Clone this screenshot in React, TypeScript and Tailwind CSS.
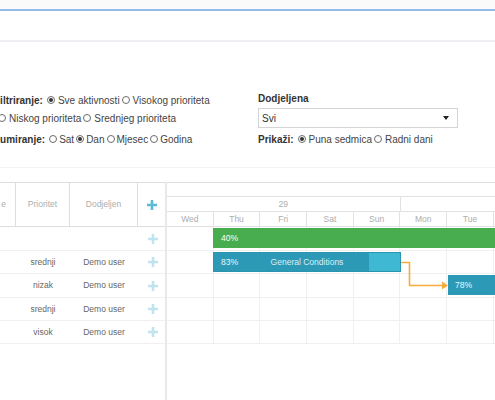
import React from "react";

function Radio({ checked = false }: { checked?: boolean }) {
  return (
    <span className="inline-flex w-[8px] h-[8px] shrink-0 rounded-full border border-[#6b6b6b] bg-white items-center justify-center">
      {checked && <span className="w-[4px] h-[4px] rounded-full bg-[#333]" />}
    </span>
  );
}

function Plus({ color }: { color: string }) {
  return (
    <svg width="10" height="10" viewBox="0 0 10 10">
      <path d="M5 0v10M0 5h10" stroke={color} strokeWidth="2.6" />
    </svg>
  );
}

const days = ["Wed", "Thu", "Fri", "Sat", "Sun", "Mon", "Tue"];

const rows = [
  { p: "", d: "", h: "h-[24px]" },
  { p: "srednji", d: "Demo user", h: "h-[23px]" },
  { p: "nizak", d: "Demo user", h: "h-[24px]" },
  { p: "srednji", d: "Demo user", h: "h-[23px]" },
  { p: "visok", d: "Demo user", h: "h-[23px]" },
];

export default function App() {
  return (
    <div className="w-[495px] h-[400px] overflow-hidden bg-white font-['Liberation_Sans',Arial,sans-serif]">
      <div className="h-[9px] bg-[#fafafa]" />
      <div className="h-[2px] bg-[#94bceb]" />
      <div className="h-[29px]" />
      <div className="h-[2px] bg-[#efeff3]" />

      {/* Filters */}
      <div className="flex pt-[49px] text-[10px] text-[#444]">
        <div className="w-[264px] -ml-[6px] pt-[2px] shrink-0">
          <div className="flex items-center h-[14px] gap-[2px] whitespace-nowrap">
            <b className="text-[#333] mr-[2px]">Filtriranje:</b>
            <Radio checked />
            <span className="ml-[1px]">Sve aktivnosti</span>
            <Radio />
            <span className="ml-[1px]">Visokog prioriteta</span>
          </div>
          <div className="flex items-center h-[14px] gap-[2px] mt-[4px] pl-[4px] whitespace-nowrap">
            <Radio />
            <span className="ml-[1px]">Niskog prioriteta</span>
            <Radio />
            <span className="ml-[1px]">Srednjeg prioriteta</span>
          </div>
          <div className="flex items-center h-[14px] gap-[2px] mt-[7px] whitespace-nowrap">
            <b className="text-[#333] mr-[2px]">Zumiranje:</b>
            <Radio />
            <span>Sat</span>
            <Radio checked />
            <span>Dan</span>
            <Radio />
            <span>Mjesec</span>
            <Radio />
            <span>Godina</span>
          </div>
        </div>
        <div className="w-[200px] shrink-0">
          <div className="h-[14px] flex items-center">
            <b className="text-[#333]">Dodjeljena</b>
          </div>
          <div className="mt-[3px] h-[20px] border border-[#d4d4d4] flex items-center justify-between pl-[3px] pr-[8px] text-[#333]">
            <span>Svi</span>
            <svg width="6" height="4" viewBox="0 0 6 4">
              <path d="M0 0h6L3 4z" fill="#222" />
            </svg>
          </div>
          <div className="flex items-center h-[14px] gap-[2px] mt-[4px] whitespace-nowrap">
            <b className="text-[#333] mr-[2px]">Prikaži:</b>
            <Radio checked />
            <span className="ml-[1px]">Puna sedmica</span>
            <Radio />
            <span className="ml-[1px]">Radni dani</span>
          </div>
        </div>
      </div>

      <div className="mt-[21px] h-px bg-[#f3f3f3]" />
      <div className="h-[14px]" />

      {/* Table */}
      <div className="flex h-[218px] text-[8.5px]">
        {/* Left grid */}
        <div className="w-[165px] shrink-0">
          <div className="h-[45px] border-t border-b border-[#dedede] flex text-[#adadad]">
            <div className="w-[16px] border-r border-[#dedede] flex items-center justify-end pr-[9px] overflow-hidden">
              e
            </div>
            <div className="w-[54px] border-r border-[#dedede] flex items-center justify-center">
              Prioritet
            </div>
            <div className="w-[68px] border-r border-[#dedede] flex items-center justify-center">
              Dodjeljen
            </div>
            <div className="w-[27px] flex items-center justify-center pl-[1px]">
              <Plus color="#58bbd9" />
            </div>
          </div>
          {rows.map((r, i) => (
            <div key={i} className={`${r.h} border-b border-[#f0f0f0] flex text-[#666]`}>
              <div className="w-[16px]" />
              <div className="w-[54px] flex items-center justify-center">{r.p}</div>
              <div className="w-[68px] flex items-center justify-center">{r.d}</div>
              <div className="w-[27px] flex items-center justify-center pl-[2px]">
                <Plus color="#bfe4ef" />
              </div>
            </div>
          ))}
        </div>

        {/* Gantt */}
        <div className="flex-1 border-l-2 border-[#e8e8e8] overflow-hidden">
          <div className="border-t border-[#dedede] text-[#adadad]">
            <div className="h-[14px] border-b border-[#e2e2e2]" />
            <div className="h-[15px] border-b border-[#e2e2e2] flex">
              <div className="w-[233.5px] shrink-0 border-r border-[#e2e2e2] flex items-center justify-center">
                29
              </div>
              <div className="flex-1" />
            </div>
            <div className="h-[15px] border-b border-[#e2e2e2] flex">
              {days.map((d) => (
                <div
                  key={d}
                  className="w-[46.7px] shrink-0 border-r border-[#e2e2e2] flex items-center justify-center"
                >
                  {d}
                </div>
              ))}
            </div>
          </div>

          <div className="relative">
            {rows.map((r, i) => (
              <div key={i} className={`${r.h} border-b border-[#f0f0f0] flex`}>
                {days.map((d) => (
                  <div key={d} className="w-[46.7px] shrink-0 h-full border-r border-[#f0f0f0]" />
                ))}
              </div>
            ))}

            {/* Bars */}
            <div className="absolute left-[46px] top-[1px] w-[400px] h-[20px] bg-[#47ad4f] flex items-center pl-[8px] text-white">
              40%
            </div>
            <div className="absolute left-[46px] top-[25px] w-[188px] h-[20px] bg-[#3fb8d4] border border-[#2a93ad]">
              <div className="absolute left-0 top-0 h-full w-[155px] bg-[#2c9ab7]" />
              <div className="absolute inset-0 flex items-center pl-[7px] text-[#eaf7fa]">83%</div>
              <div className="absolute inset-0 flex items-center justify-center text-[#d9eff5]">
                General Conditions
              </div>
            </div>
            <div className="absolute left-[281px] top-[48px] w-[100px] h-[20px] bg-[#2c9ab7] flex items-center pl-[7px] text-[#eaf7fa]">
              78%
            </div>

            {/* Dependency arrow */}
            <svg className="absolute left-0 top-0" width="330" height="120" viewBox="0 0 330 120">
              <path d="M234 35.5H242.5V58.5H275" fill="none" stroke="#f9aa3c" strokeWidth="1.6" />
              <path d="M275 54.5L281 58.5L275 62.5z" fill="#f9aa3c" />
            </svg>
          </div>
        </div>
      </div>
    </div>
  );
}
